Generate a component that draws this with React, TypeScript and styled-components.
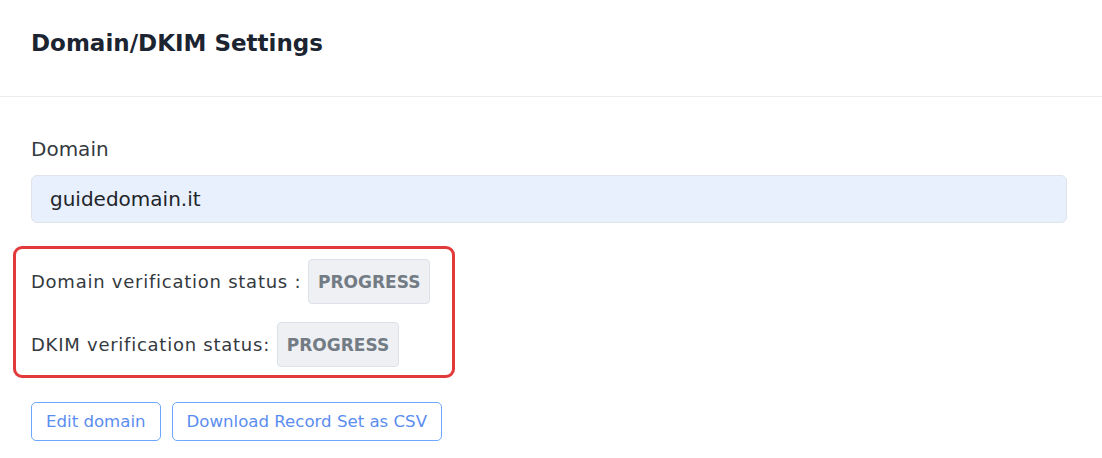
import styled, { createGlobalStyle } from "styled-components";

const GlobalStyle = createGlobalStyle`
  body {
    margin: 0;
    background: #ffffff;
    font-family: "DejaVu Sans", "Liberation Sans", sans-serif;
  }
`;

const Card = styled.div`
  width: 1102px;
  background: #fff;
`;

const Header = styled.div`
  height: 97px;
  box-sizing: border-box;
  padding: 0 31px 10px;
  display: flex;
  align-items: center;
  border-bottom: 1px solid #ececec;
  h2 {
    margin: 0;
    font-size: 23px;
    font-weight: 600;
    color: #1c2431;
  }
`;

const Body = styled.div`
  padding: 40px 35px 0 31px;
`;

const Label = styled.label`
  display: block;
  font-size: 20px;
  color: #343a40;
  margin-bottom: 14px;
`;

const Input = styled.input`
  width: 100%;
  height: 48px;
  box-sizing: border-box;
  border: 1px solid #dfe3ea;
  border-radius: 6px;
  background: #e8f0fe;
  padding: 0 18px;
  font-family: inherit;
  font-size: 20px;
  color: #212529;
  outline: none;
`;

const StatusBox = styled.div`
  width: 442px;
  box-sizing: border-box;
  margin: 23px 0 0 -18px;
  border: 3px solid #e23a3a;
  border-radius: 9px;
  padding: 10px 20px 8px 15px;
  display: flex;
  flex-direction: column;
  gap: 18px;
`;

const StatusRow = styled.div`
  display: flex;
  align-items: center;
  gap: 7px;
  font-size: 18px;
  letter-spacing: 0.75px;
  color: #343a40;
`;

const Badge = styled.span`
  display: inline-flex;
  align-items: center;
  justify-content: center;
  width: 122px;
  height: 45px;
  box-sizing: border-box;
  background: #eef0f3;
  border: 1px solid #dde2ea;
  border-radius: 4px;
  font-size: 17px;
  letter-spacing: 0;
  font-weight: 600;
  color: #737b84;
`;

const Actions = styled.div`
  display: flex;
  gap: 11px;
  margin-top: 24px;
`;

const OutlineButton = styled.button`
  height: 39px;
  padding: 0 14px;
  background: #fff;
  border: 1px solid #6ea8fe;
  border-radius: 5px;
  color: #5b8df0;
  font-family: inherit;
  font-size: 16.6px;
  cursor: pointer;
`;

export default function App() {
  return (
    <>
      <GlobalStyle />
      <Card>
        <Header>
          <h2>Domain/DKIM Settings</h2>
        </Header>
        <Body>
          <Label>Domain</Label>
          <Input defaultValue="guidedomain.it" readOnly />
          <StatusBox>
            <StatusRow>
              Domain verification status : <Badge>PROGRESS</Badge>
            </StatusRow>
            <StatusRow>
              DKIM verification status: <Badge>PROGRESS</Badge>
            </StatusRow>
          </StatusBox>
          <Actions>
            <OutlineButton>Edit domain</OutlineButton>
            <OutlineButton>Download Record Set as CSV</OutlineButton>
          </Actions>
        </Body>
      </Card>
    </>
  );
}
